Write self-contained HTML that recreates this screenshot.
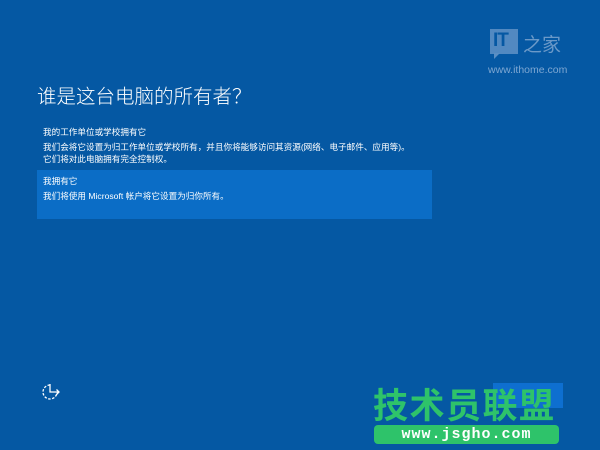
<!DOCTYPE html>
<html><head><meta charset="utf-8"><style>
*{margin:0;padding:0;box-sizing:border-box}
body{width:600px;height:450px;overflow:hidden;background:#0558a3;font-family:"Liberation Sans","Noto Sans CJK SC",sans-serif;color:#fff;position:relative}
.a{position:absolute;white-space:nowrap}
.t{left:37px;top:80px;font-size:19.5px;font-weight:300}
.s{font-size:8.6px;line-height:13px}
.box{position:absolute;left:37px;top:170px;width:395px;height:49px;background:#0b6dc6}
.logo{left:490px;top:29px;width:28px;height:25px;background:#5b8fc4;opacity:.9}
.w{left:488px;top:64px;font-size:10.5px;color:#7ea7d2}
.btn{position:absolute;left:493px;top:383px;width:70px;height:25px;background:#0e6fd0}
.g{color:#2ec36a;font-weight:bold;font-size:35px;left:373px;top:378px;letter-spacing:1.5px}
.url{position:absolute;left:374px;top:425px;width:185px;height:19px;background:#2ec36a;border-radius:4px;color:#fff;font:bold 15px "Liberation Mono",monospace;text-align:center;line-height:19px;letter-spacing:1px}
</style></head><body>
<div class="a logo"></div>
<div class="a" style="left:494px;top:53px;width:0;height:0;border-left:6px solid #5b8fc4;border-bottom:6px solid transparent"></div>
<div class="a" style="left:493px;top:30px;font:bold 19px 'Liberation Sans';color:#0558a3;letter-spacing:-1px">IT</div>
<div class="a" style="left:523px;top:30px;font-size:19px;color:#6b99c8">之家</div>
<div class="a w">www.ithome.com</div>
<div class="a t">谁是这台电脑的所有者？</div>
<div class="a s" style="left:43px;top:126px">我的工作单位或学校拥有它</div>
<div class="a s" style="left:43px;top:141px">我们会将它设置为归工作单位或学校所有，并且你将能够访问其资源(网络、电子邮件、应用等)。</div>
<div class="a s" style="left:43px;top:153px">它们将对此电脑拥有完全控制权。</div>
<div class="box"></div>
<div class="a s" style="left:43px;top:175px">我拥有它</div>
<div class="a s" style="left:43px;top:190px">我们将使用 Microsoft 帐户将它设置为归你所有。</div>
<svg class="a" style="left:40px;top:383px" width="24" height="20" viewBox="0 0 24 20"><path d="M10 2 A7 7 0 1 0 17 9" fill="none" stroke="#fff" stroke-width="1.3" stroke-dasharray="2.5 1.5"/><path d="M10 1 V9 H19 M16.5 6.5 L19 9 L16.5 11.5" fill="none" stroke="#fff" stroke-width="1.3"/></svg>
<div class="btn"></div>
<div class="a g">技术员联盟</div>
<div class="url">www.jsgho.com</div>
</body></html>
